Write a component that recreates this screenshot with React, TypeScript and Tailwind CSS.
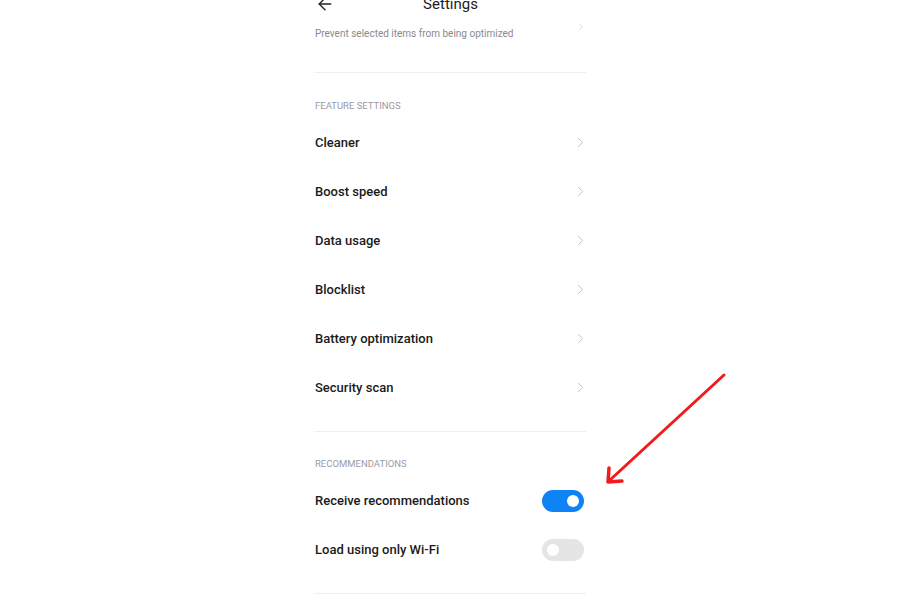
import { ArrowLeft, ChevronRight } from 'lucide-react';

const features = [
  'Cleaner',
  'Boost speed',
  'Data usage',
  'Blocklist',
  'Battery optimization',
  'Security scan',
];

function Toggle({ on }: { on: boolean }) {
  return (
    <div
      className={
        on
          ? 'mr-[2px] w-[42px] h-[22px] rounded-full bg-[#0f82f5] flex items-center justify-end pr-[5px]'
          : 'mr-[2px] w-[42px] h-[22px] rounded-full bg-[#e5e5e5] flex items-center justify-start pl-[5px]'
      }
    >
      <div className="w-[12px] h-[12px] rounded-full bg-white" />
    </div>
  );
}

export default function App() {
  return (
    <div
      className="relative w-[900px] h-[600px] bg-white overflow-hidden"
      style={{ fontFamily: 'Roboto, "Noto Sans", sans-serif' }}
    >
      <div className="w-[271px] ml-[315px] flex flex-col">
        {/* 顶部标题，上半部分被裁掉 */}
        <div className="-mt-[12px] h-[32px] relative flex items-center justify-center">
          <ArrowLeft className="absolute left-0 w-[20px] h-[20px] text-[#222]" strokeWidth={1.6} />
          <span className="text-[15px] text-[#1c1c1c]">Settings</span>
        </div>

        <div className="mt-[6px] h-[14px] flex items-center justify-between">
          <span className="text-[10px] text-[#8a8a8a]">Prevent selected items from being optimized</span>
          <ChevronRight className="w-[12px] h-[12px] -mt-[12px] -mr-[1px] text-[#dddddd]" />
        </div>
        <div className="mt-[32px] border-t border-[#eeeeee]" />

        {/* Feature settings */}
        <div className="mt-[26px] h-[14px] flex items-center text-[9.5px] text-[#9b9ba6]">
          FEATURE SETTINGS
        </div>
        <div className="mt-[5px] flex flex-col">
          {features.map(f => (
            <div key={f} className="h-[49px] flex items-center justify-between">
              <span className="text-[13px] font-medium text-[#1a1a1a]">{f}</span>
              <ChevronRight className="w-[17px] h-[17px] text-[#bdbdbd] -mr-[3px]" strokeWidth={1.3} />
            </div>
          ))}
        </div>
        <div className="mt-[19px] border-t border-[#eeeeee]" />

        {/* Recommendations */}
        <div className="mt-[25px] h-[14px] flex items-center text-[9.5px] text-[#9b9ba6]">
          RECOMMENDATIONS
        </div>
        <div className="mt-[5px] flex flex-col">
          <div className="h-[49px] flex items-center justify-between">
            <span className="text-[13px] font-medium text-[#1a1a1a]">Receive recommendations</span>
            <Toggle on />
          </div>
          <div className="h-[49px] flex items-center justify-between">
            <span className="text-[13px] font-medium text-[#1a1a1a]">Load using only Wi-Fi</span>
            <Toggle on={false} />
          </div>
        </div>
        <div className="mt-[19px] border-t border-[#eeeeee]" />
      </div>

      {/* 红色标注箭头 */}
      <svg className="absolute left-0 top-0" width="900" height="600" viewBox="0 0 900 600">
        <line x1="724" y1="375" x2="610" y2="480" stroke="#f01c1c" strokeWidth="3" strokeLinecap="round" />
        <polyline
          points="609,468 608,482 622,481"
          fill="none"
          stroke="#f01c1c"
          strokeWidth="3.5"
          strokeLinecap="round"
          strokeLinejoin="round"
        />
      </svg>
    </div>
  );
}
